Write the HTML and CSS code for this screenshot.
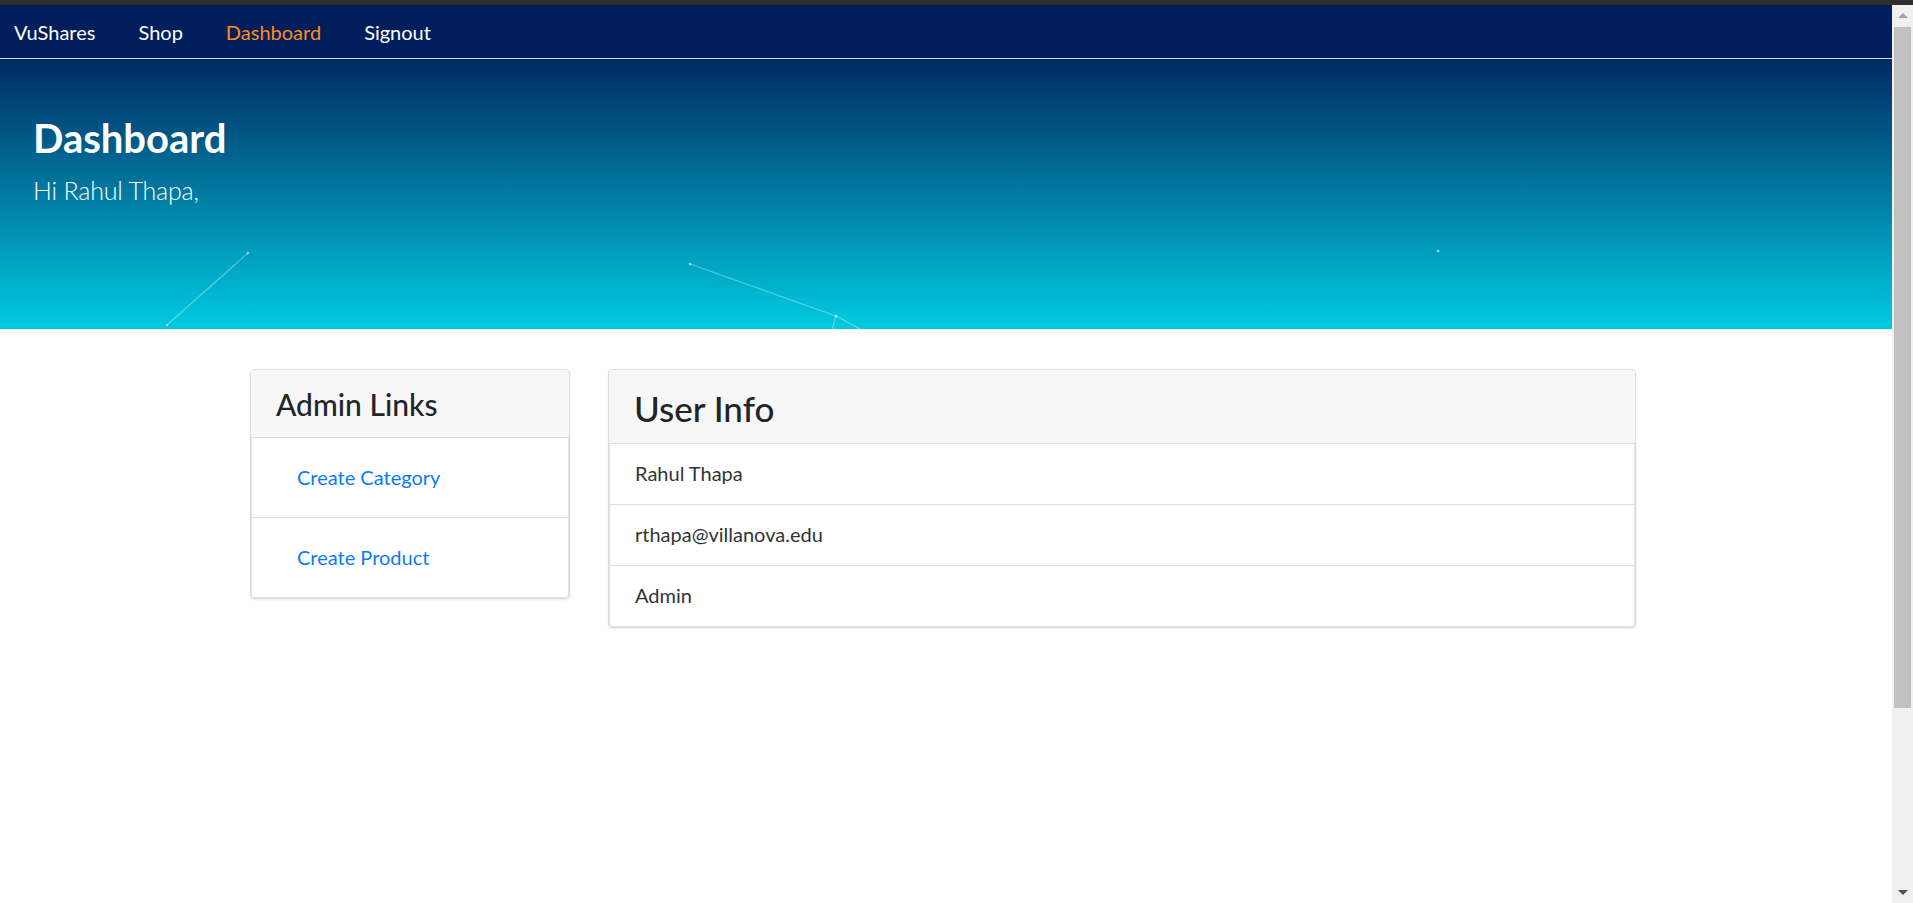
FILE: index.html
```html
<!DOCTYPE html>
<html lang="en">
<head>
<meta charset="utf-8">
<title>Dashboard - VuShares</title>
<link rel="stylesheet" href="styles.css">
</head>
<body>
<div class="chrome-strip"></div>
<div class="window">
  <div class="viewport">
    <nav class="navbar">
      <a class="nav-link" href="#">VuShares</a>
      <a class="nav-link" href="#">Shop</a>
      <a class="nav-link active" href="#">Dashboard</a>
      <a class="nav-link" href="#">Signout</a>
    </nav>
    <header class="jumbotron">
      <svg class="particles" width="1892" height="270" viewBox="0 0 1892 270">
        <g stroke="rgba(255,255,255,0.35)" stroke-width="1.2" fill="none">
          <line x1="248" y1="194" x2="167" y2="266"/>
          <line x1="690" y1="205" x2="836" y2="257"/>
          <line x1="836" y1="257" x2="862" y2="271"/>
          <line x1="836" y1="257" x2="832" y2="271"/>
        </g>
        <g fill="rgba(255,255,255,0.55)">
          <circle cx="248" cy="194" r="1.3"/>
          <circle cx="167" cy="266" r="1.3"/>
          <circle cx="690" cy="205" r="1.3"/>
          <circle cx="836" cy="257" r="1.5"/>
          <circle cx="1438" cy="192" r="1.5"/>
        </g>
      </svg>
      <h2 class="jumbo-title">Dashboard</h2>
      <p class="lead">Hi Rahul Thapa,</p>
    </header>
    <main class="container">
      <section class="card card-admin">
        <div class="card-header header-admin"><h4 class="card-title-sm">Admin Links</h4></div>
        <ul class="list-group">
          <li class="list-item link-item"><a class="item-link" href="#">Create Category</a></li>
          <li class="list-item link-item"><a class="item-link" href="#">Create Product</a></li>
        </ul>
      </section>
      <section class="card card-user">
        <div class="card-header header-user"><h3 class="card-title-lg">User Info</h3></div>
        <ul class="list-group">
          <li class="list-item info-item">Rahul Thapa</li>
          <li class="list-item info-item">rthapa@villanova.edu</li>
          <li class="list-item info-item">Admin</li>
        </ul>
      </section>
    </main>
  </div>
  <div class="scrollbar">
    <div class="scroll-btn"><span class="arrow-up"></span></div>
    <div class="scroll-track"><div class="scroll-thumb"></div></div>
    <div class="scroll-btn"><span class="arrow-down"></span></div>
  </div>
</div>
</body>
</html>
```
FILE: styles.css
```css
html, body {
  margin: 0;
  padding: 0;
  height: 903px;
  overflow: hidden;
  background: #ffffff;
  font-family: Lato, "Open Sans", "Liberation Sans", sans-serif;
}

.chrome-strip {
  height: 5px;
  background: #2e2e2e;
}

.window {
  display: flex;
  height: 898px;
}

.viewport {
  width: 1892px;
  flex: none;
  overflow: hidden;
}

.scrollbar {
  width: 21px;
  flex: none;
  display: flex;
  flex-direction: column;
  background: #f0f0f0;
}

.scroll-btn {
  height: 21px;
  flex: none;
  display: flex;
  align-items: center;
  justify-content: center;
}

.scroll-track {
  flex: 1;
  padding: 1px 2px 0;
}

.scroll-thumb {
  height: 681px;
  background: #c1c1c1;
}

.arrow-up {
  width: 0;
  height: 0;
  border-left: 5px solid transparent;
  border-right: 5px solid transparent;
  border-bottom: 5px solid #a3a3a3;
}

.arrow-down {
  width: 0;
  height: 0;
  border-left: 5px solid transparent;
  border-right: 5px solid transparent;
  border-top: 5px solid #505050;
}

.navbar {
  display: flex;
  align-items: center;
  height: 53px;
  padding-left: 14px;
  background: #011e5c;
  border-bottom: 1px solid #d6dae4;
}

.nav-link {
  font-size: 20px;
  line-height: 24px;
  color: #ffffff;
  text-decoration: none;
  margin-right: 43px;
}

.nav-link.active {
  color: #ff8a1d;
}

.jumbotron {
  position: relative;
  height: 270px;
  box-sizing: border-box;
  padding: 55px 33px 0;
  background: linear-gradient(180deg, #012a63 0%, #00cbe0 100%);
  color: #ffffff;
  overflow: hidden;
}

.particles {
  position: absolute;
  left: 0;
  top: 0;
}

.jumbo-title {
  position: relative;
  margin: 0 0 10px;
  font-size: 40px;
  line-height: 48px;
  font-weight: 700;
}

.lead {
  position: relative;
  margin: 0;
  font-size: 25px;
  line-height: 37px;
  font-weight: 300;
  letter-spacing: -0.2px;
}

.container {
  display: flex;
  align-items: flex-start;
  gap: 38px;
  width: 1386px;
  margin: 40px 0 0 250px;
}

.card {
  border: 1px solid #dcdcdc;
  border-radius: 4px;
  background: #ffffff;
  box-shadow: 0 1px 2px rgba(0, 0, 0, 0.08);
  overflow: hidden;
}

.card-admin {
  width: 318px;
  flex: none;
}

.card-user {
  flex: 1;
}

.card-header {
  box-sizing: border-box;
  background: #f7f7f7;
  border-bottom: 1px solid #dedede;
  padding: 0 25px;
}

.header-admin {
  height: 68px;
  padding-top: 16px;
}

.header-user {
  height: 74px;
  padding-top: 17px;
}

.card-title-sm {
  margin: 0;
  font-size: 30px;
  line-height: 36px;
  font-weight: 500;
  color: #212529;
}

.card-title-lg {
  margin: 0;
  font-size: 35px;
  line-height: 42px;
  font-weight: 500;
  color: #212529;
}

.list-group {
  list-style: none;
  margin: 0;
  padding: 0;
  border: 1px solid #e2e2e2;
  border-top: none;
  border-radius: 0 0 4px 4px;
}

.list-item {
  font-size: 20px;
  line-height: 30px;
  padding: 0 25px;
  border-bottom: 1px solid #e0e0e0;
}

.list-item:last-child {
  border-bottom: none;
}

.link-item {
  padding-top: 24px;
  padding-bottom: 25px;
}

.item-link {
  display: block;
  padding: 0 20px;
  color: #0a7cf5;
  text-decoration: none;
}

.info-item {
  padding-top: 14px;
  padding-bottom: 16px;
  color: #343434;
}
```
